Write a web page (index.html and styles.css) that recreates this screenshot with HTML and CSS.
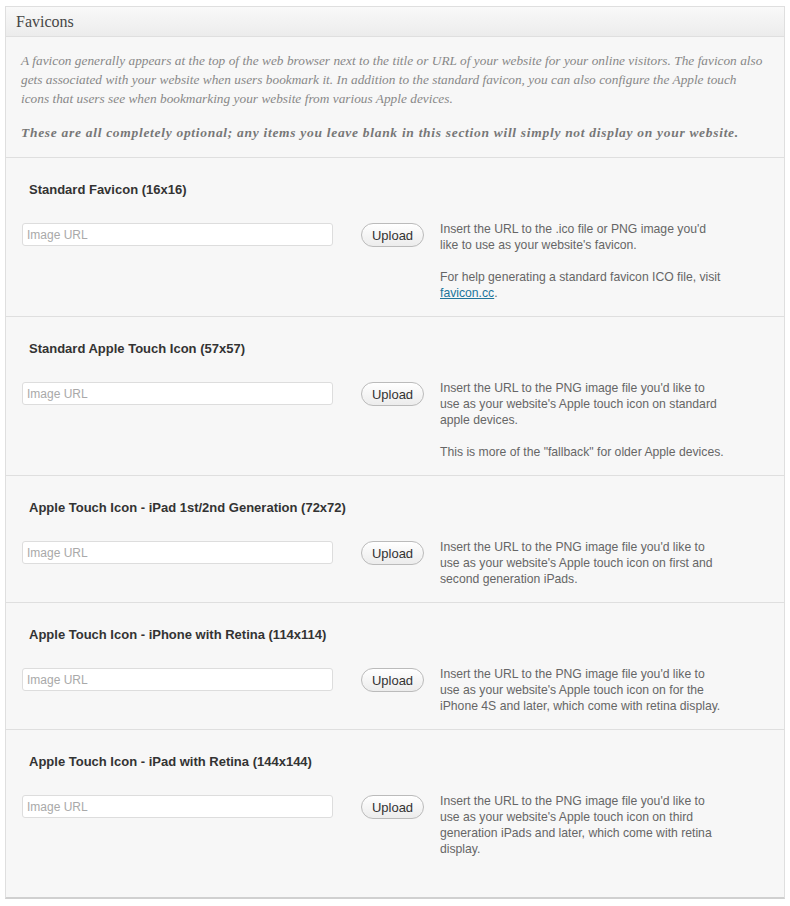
FILE: index.html
```html
<!DOCTYPE html>
<html>
<head>
<meta charset="utf-8">
<link rel="stylesheet" href="styles.css">
</head>
<body>
<div class="panel">
  <div class="panel-head">Favicons</div>
  <div class="intro">
    <p>A favicon generally appears at the top of the web browser next to the title or URL of your website for your online visitors. The favicon also<br>gets associated with your website when users bookmark it. In addition to the standard favicon, you can also configure the Apple touch<br>icons that users see when bookmarking your website from various Apple devices.</p>
    <p class="strong">These are all completely optional; any items you leave blank in this section will simply not display on your website.</p>
  </div>

  <div class="section">
    <h3 class="title">Standard Favicon (16x16)</h3>
    <div class="row">
      <input class="url" type="text" placeholder="Image URL">
      <button class="upload">Upload</button>
      <div class="desc">
        <p>Insert the URL to the .ico file or PNG image you'd<br>like to use as your website's favicon.</p>
        <p>For help generating a standard favicon ICO file, visit<br><a href="#">favicon.cc</a>.</p>
      </div>
    </div>
  </div>

  <div class="section">
    <h3 class="title">Standard Apple Touch Icon (57x57)</h3>
    <div class="row">
      <input class="url" type="text" placeholder="Image URL">
      <button class="upload">Upload</button>
      <div class="desc">
        <p>Insert the URL to the PNG image file you'd like to<br>use as your website's Apple touch icon on standard<br>apple devices.</p>
        <p>This is more of the "fallback" for older Apple devices.</p>
      </div>
    </div>
  </div>

  <div class="section">
    <h3 class="title">Apple Touch Icon - iPad 1st/2nd Generation (72x72)</h3>
    <div class="row">
      <input class="url" type="text" placeholder="Image URL">
      <button class="upload">Upload</button>
      <div class="desc">
        <p>Insert the URL to the PNG image file you'd like to<br>use as your website's Apple touch icon on first and<br>second generation iPads.</p>
      </div>
    </div>
  </div>

  <div class="section">
    <h3 class="title">Apple Touch Icon - iPhone with Retina (114x114)</h3>
    <div class="row">
      <input class="url" type="text" placeholder="Image URL">
      <button class="upload">Upload</button>
      <div class="desc">
        <p>Insert the URL to the PNG image file you'd like to<br>use as your website's Apple touch icon on for the<br>iPhone 4S and later, which come with retina display.</p>
      </div>
    </div>
  </div>

  <div class="section last">
    <h3 class="title">Apple Touch Icon - iPad with Retina (144x144)</h3>
    <div class="row">
      <input class="url" type="text" placeholder="Image URL">
      <button class="upload">Upload</button>
      <div class="desc">
        <p>Insert the URL to the PNG image file you'd like to<br>use as your website's Apple touch icon on third<br>generation iPads and later, which come with retina<br>display.</p>
      </div>
    </div>
  </div>
</div>
</body>
</html>
```

FILE: styles.css
```css
html, body {
  margin: 0;
  padding: 0;
  background: #ffffff;
}
body {
  padding: 6px 5px 0 5px;
  font-family: "Liberation Sans", Arial, sans-serif;
}
.panel {
  width: 778px;
  border: 1px solid #dfdfdf;
  border-bottom-color: #d0d0d0;
  border-bottom-width: 2px;
  background: #f7f7f7;
  padding-bottom: 25px;
}
.panel-head {
  height: 29px;
  line-height: 29px;
  padding-left: 10px;
  font-family: "Liberation Serif", Georgia, serif;
  font-size: 16px;
  color: #464646;
  background: linear-gradient(#f9f9f9, #ececec);
  border-bottom: 1px solid #dfdfdf;
}
.intro {
  padding: 14px 10px 15px 15px;
  border-bottom: 1px solid #dfdfdf;
}
.intro p {
  margin: 0;
  font-family: "Liberation Serif", Georgia, serif;
  font-style: italic;
  font-size: 13.3px;
  word-spacing: 0.1px;
  line-height: 19px;
  color: #888888;
  white-space: nowrap;
}
.intro p.strong {
  margin-top: 15px;
  font-size: 13.5px;
  word-spacing: 0;
  letter-spacing: 0.7px;
  font-weight: bold;
  color: #777777;
}
.section {
  padding: 24px 16px 15px 16px;
  border-bottom: 1px solid #dfdfdf;
}
.section.last {
  border-bottom: 0;
}
.title {
  margin: 0 0 25px 7px;
  font-size: 13px;
  line-height: 16px;
  font-weight: bold;
  color: #333333;
}
.row {
  display: flex;
  align-items: flex-start;
}
.url {
  box-sizing: border-box;
  width: 311px;
  height: 23px;
  margin: 0;
  padding: 0 4px;
  border: 1px solid #dddddd;
  border-radius: 3px;
  background: #ffffff;
  font-family: "Liberation Sans", Arial, sans-serif;
  font-size: 12px;
  color: #333;
  outline: none;
}
.url::placeholder {
  color: #a9a9a9;
}
.upload {
  box-sizing: border-box;
  margin: 0 0 0 28px;
  width: 63px;
  height: 24px;
  padding: 0;
  border: 1px solid #bbbbbb;
  border-radius: 12px;
  background: linear-gradient(#ffffff, #ececec);
  font-family: "Liberation Sans", Arial, sans-serif;
  font-size: 13px;
  color: #333;
}
.desc {
  width: 320px;
  margin-left: 16px;
  margin-top: -2px;
}
.desc p {
  margin: 0;
  font-size: 12.2px;
  line-height: 16px;
  color: #666666;
  white-space: nowrap;
}
.desc p + p {
  margin-top: 16px;
}
.desc a {
  color: #21759b;
  text-decoration: underline;
}
```
